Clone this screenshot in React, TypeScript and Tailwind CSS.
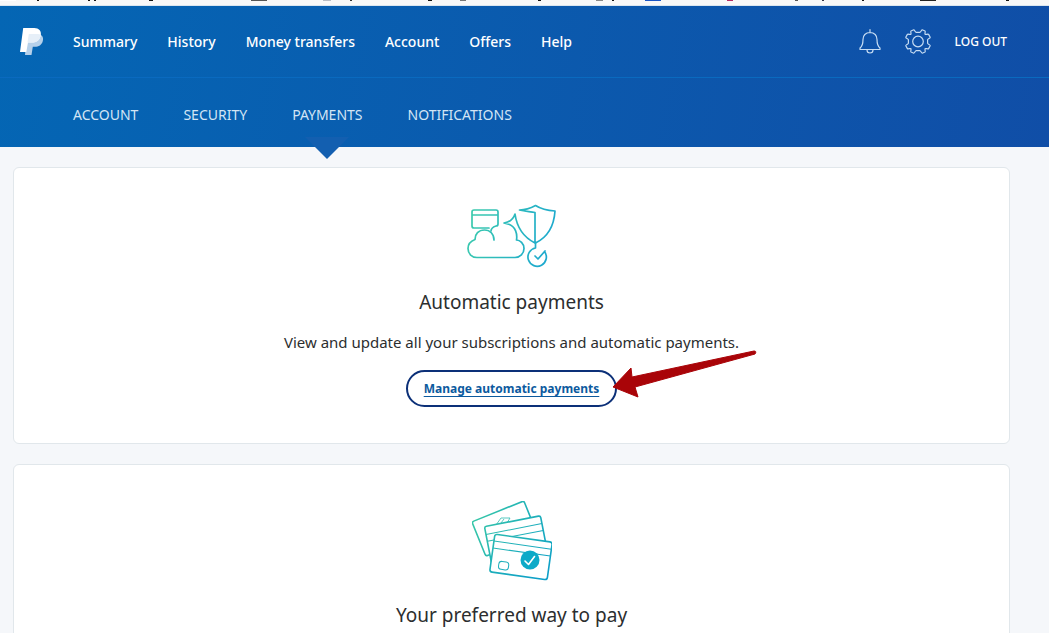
import React from "react";

const mainLinks = ["Summary", "History", "Money transfers", "Account", "Offers", "Help"];
const subLinks = ["Account", "Security", "Payments", "Notifications"];

const marks: [number, number, string][] = [
  [37, 2, "#111"], [88, 2, "#111"], [94, 2, "#111"], [149, 4, "#111"], [251, 16, "#555"],
  [323, 8, "#b8bcc4"], [350, 2, "#333"], [428, 4, "#111"], [460, 6, "#777"], [538, 3, "#111"],
  [596, 7, "#888"], [612, 2, "#111"], [645, 16, "#1a55c4"], [727, 6, "#b52a63"], [795, 3, "#555"],
  [822, 2, "#334"], [862, 2, "#111"], [920, 16, "#222"], [1006, 3, "#111"],
];

function TopStrip() {
  return (
    <div className="h-1.5 overflow-hidden border-b border-[#dbe6ef] bg-[#f8f8f8]" aria-hidden="true">
      <svg width="1049" height="5" shapeRendering="crispEdges">
        <rect width="16" height="1" fill="#fff" />
        {marks.map(([x, w, c]) => (
          <rect key={x} x={x} width={w} height="1" fill={c} />
        ))}
      </svg>
    </div>
  );
}

function Logo() {
  return (
    <svg width="24" height="28" viewBox="0 0 24 28" aria-hidden="true">
      <path d="M7 6h10.500C21.500 6 24 9 22.800 13c-1 4-4 5.800-8 5.800h-2L11.500 27H5z" fill="#b5d0ea" />
      <path d="M3.200 0h11C19 0 21.500 3 20.800 7c-.8 5-4 7.500-9 7.500H8L6.300 24H0z" fill="#fff" />
      <path d="M8.800 6h9c1.300 0 2.300.3 3 .9C20 12 16.500 14.500 12 14.500H7.500z" fill="#e6eff8" />
    </svg>
  );
}

function Bell() {
  return (
    <svg width="22" height="26" viewBox="0 1 22 26" fill="none" stroke="#c6dcf3" strokeWidth="1.2" strokeLinecap="round" strokeLinejoin="round" aria-hidden="true">
      <path d="M11 1.600v3M11 4.500C6.500 4.500 4 7.500 4 11.500c0 5-1 7-3 8.500v1.500h20V20c-2-1.500-3-3.500-3-8.500C18 7.500 15.500 4.500 11 4.500M8 22c0 4 6 4 6 0" />
    </svg>
  );
}

function Gear() {
  return (
    <svg width="26" height="26" viewBox="0 0 26 26" fill="none" stroke="#c6dcf3" strokeWidth="1.200" strokeLinejoin="round" aria-hidden="true">
      <circle cx="13" cy="12.500" r="5.300" />
      <path d="M8.800.8C9.500.8 10.300 3.400 11.200 3.400h3.600C15.700 3.400 16.500.8 17.200.8L20 2c.8.500-.5 2.600.1 3.300.7.600 3-.7 3.500.1l1.600 2.900c.2.800-2.600 1.500-2.600 2.400v3.600c0 .9 2.800 1.600 2.600 2.400l-1.600 2.900c-.5.800-2.800-.5-3.500.1-.6.700.7 2.800-.1 3.300l-2.800 1.200c-.7 0-1.500-2.600-2.400-2.600h-3.600c-.9 0-1.700 2.600-2.400 2.600L6 23c-.8-.5.500-2.600-.1-3.300-.7-.6-3 .7-3.500-.1L.8 16.700c-.2-.8 2.600-1.500 2.600-2.400v-3.600C3.400 9.800.6 9.100.8 8.300l1.600-2.900c.5-.8 2.800.5 3.500-.1C6.500 4.600 5.200 2.500 6 2z" />
    </svg>
  );
}

function AutoArt() {
  return (
    <svg width="90" height="64" viewBox="0 1 90 64" fill="none" stroke="url(#teal-a)" strokeWidth="1.700" strokeLinecap="round" strokeLinejoin="round" aria-hidden="true">
      <defs>
        <linearGradient id="teal-a" gradientUnits="userSpaceOnUse" x1="0" y1="0" x2="90" y2="30">
          <stop stopColor="#3ecdaa" />
          <stop offset="1" stopColor="#1ca8cf" />
        </linearGradient>
      </defs>
      <path d="M22 25H7a2 2 0 0 1-2-2V9a2 2 0 0 1 2-2h22a2 2 0 0 1 2 2v12a2 2 0 0 1-2 2c-3 1-5 2-5 5M5 12h26" />
      <path d="M27 37c0-6-4-10-9.500-10-6 0-9.500 4-9.500 9.500C4 38 1 41 1 45.500 1 51 5 54.500 10 54.500h38c5 0 9-4 9-9S53 37 49.500 37c1-6-1-13-7-15.500l-5.500-1.500c6-1 9.500-4 11-9 2 14 8 23 20 29V9.500c-5-1-10-1-15.500-2.500C59 7 64 5 68.500 2.500 74 6 80 7.500 88 8c-1 15-7 26-19.500 32" />
      <path d="M68.500 39v6a9.200 9.200 0 1 0 9 3.500M68 53l3 3 7-8" />
    </svg>
  );
}

function CardsArt() {
  return (
    <svg width="80" height="80" viewBox="0 0 80 80" fill="#fff" stroke="url(#teal-b)" strokeWidth="1.600" strokeLinejoin="round" aria-hidden="true">
      <defs>
        <linearGradient id="teal-b" gradientUnits="userSpaceOnUse" x1="0" y1="10" x2="70" y2="75">
          <stop stopColor="#38c8a6" />
          <stop offset="1" stopColor="#0d9fc8" />
        </linearGradient>
      </defs>
      <rect x="5" y="9" width="56" height="37" rx="2" transform="rotate(-22 33 28)" />
      <path d="m24 24 5-7h9l-3 5M29 22l3-4" strokeWidth=".8" />
      <g transform="rotate(-11 43 36)">
        <rect x="15" y="20" width="57" height="38" rx="2" />
        <path d="M15 28h57M15 35h57" strokeWidth="1" />
      </g>
      <g transform="rotate(8 49 56)">
        <rect x="20" y="37" width="58" height="38" rx="2.500" />
        <path d="M20 44h58M20 51h58" strokeWidth="1" />
        <rect x="28" y="63" width="10" height="8" rx="3" strokeWidth="1" />
      </g>
      <circle cx="58" cy="59" r="9.500" fill="#0daac8" stroke="none" />
      <path d="m53 60 3.500 3.500 6-8" fill="none" stroke="#fff" strokeWidth="1.600" strokeLinecap="round" />
    </svg>
  );
}

export default function App() {
  return (
    <div className="h-screen overflow-hidden bg-[#f5f7fa] font-['Noto_Sans',sans-serif] text-[#2c2e2f]">
      <TopStrip />
      <header className="bg-linear-100 from-[#0466b4] to-[#104ea7] text-white">
        <div className="flex h-18 items-center border-b border-[#0a6abf] pr-[42px] pl-5">
          <a href="#home" aria-label="PayPal" className="mr-[29px]">
            <Logo />
          </a>
          <nav aria-label="Main" className="flex gap-[30px] text-sm font-medium">
            {mainLinks.map((l) => (
              <a key={l} href="#main">{l}</a>
            ))}
          </nav>
          <div className="ml-auto flex items-center gap-6">
            <button type="button" aria-label="Notifications"><Bell /></button>
            <button type="button" aria-label="Settings"><Gear /></button>
            <a href="#logout" className="text-xs font-medium uppercase">Log out</a>
          </div>
        </div>
        <nav aria-label="Profile" className="flex h-[69px] items-stretch gap-[45px] pl-[73px] text-sm text-[#d3e5f5] uppercase">
          {subLinks.map((l) => (
            <a key={l} href="#section" className="relative flex items-center pt-1">
              {l}
              {l === "Payments" && (
                <svg className="absolute top-full left-1/2 -mt-2.5 -translate-x-1/2" width="44" height="22" aria-hidden="true">
                  <path d="M0 0h44L22 22z" fill="#135fb0" />
                </svg>
              )}
            </a>
          ))}
        </nav>
      </header>
      <main className="mr-[39px] ml-[13px] flex flex-col gap-5 pt-5">
        <section className="flex flex-col items-center rounded-md border border-[#e1e7eb] bg-white py-9 text-center">
          <AutoArt />
          <h2 className="mt-5 text-[19px] leading-7">Automatic payments</h2>
          <p className="mt-3.5 text-[15px] leading-6">View and update all your subscriptions and automatic payments.</p>
          <div className="relative mt-4">
            <a href="#manage" className="flex h-[37px] items-center rounded-full border-2 border-[#0c3078] px-4 text-xs font-bold text-[#0c5a9e] underline underline-offset-3">
              Manage automatic payments
            </a>
            <svg className="absolute -top-5 left-full -ml-1" width="144" height="48" aria-hidden="true">
              <path d="M0 37 18 18l1 9L141 1q3 0 1 3L22 37l3 10z" fill="#a90408" stroke="#a90408" strokeLinejoin="round" />
            </svg>
          </div>
        </section>
        <section className="flex flex-col items-center rounded-md border border-[#e1e7eb] bg-white py-9 text-center">
          <CardsArt />
          <h2 className="mt-5 text-[19px] leading-7">Your preferred way to pay</h2>
        </section>
      </main>
    </div>
  );
}
